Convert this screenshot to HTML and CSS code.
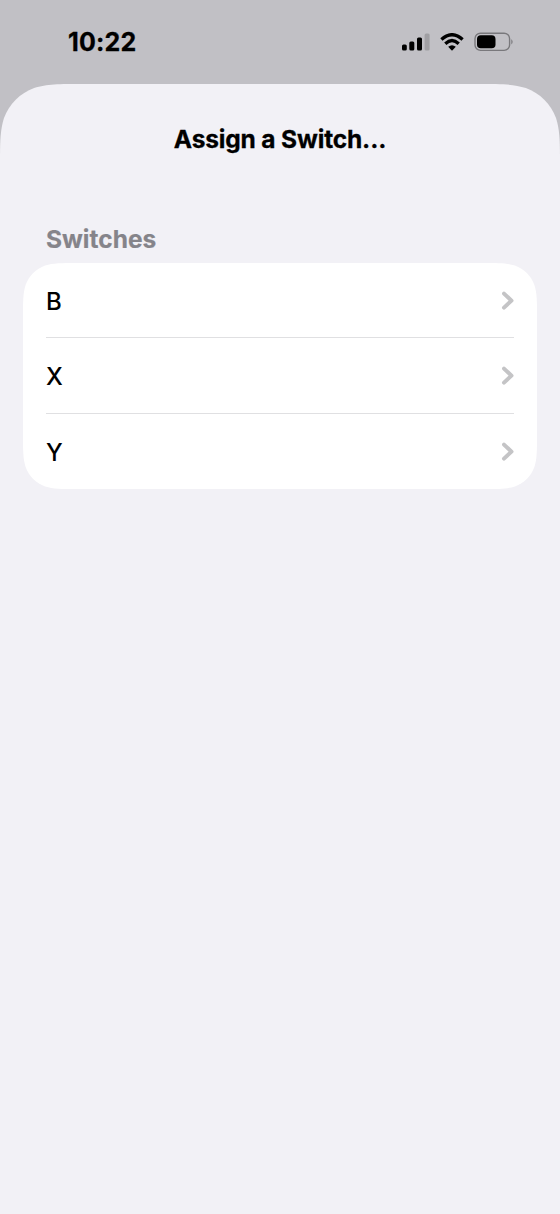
FILE: index.html
```html
<!DOCTYPE html>
<html lang="en">
<head>
<meta charset="utf-8">
<title>Assign a Switch</title>
<link rel="stylesheet" href="styles.css">
</head>
<body>
<header class="status">
  <span class="time">10:22</span>
  <div class="indicators">
    <svg class="signal" width="28" height="18" viewBox="0 0 28 18">
      <rect x="0" y="11.5" width="4.8" height="6" rx="1.5"/>
      <rect x="7.3" y="8.5" width="5" height="9" rx="1.5"/>
      <rect x="15" y="4.5" width="5" height="13" rx="1.5"/>
      <rect x="22.6" y="0.5" width="5" height="17" rx="1.5" fill="#a09fa3"/>
    </svg>
    <svg class="wifi" width="24" height="18" viewBox="0 0 24 18">
      <path d="M1.4 6.5Q12-3.1 22.6 6.5M5.3 10.7Q12 4.5 18.7 10.7" fill="none" stroke="#000" stroke-width="3.3"/>
      <path d="M8.2 13.7Q12 10.6 15.8 13.7L12 17.8Z"/>
    </svg>
    <svg class="battery" width="40" height="20" viewBox="0 0 40 20">
      <rect x="1" y="1.2" width="34.6" height="17.2" rx="5.5" fill="none" stroke="#79787c" stroke-width="1.4"/>
      <rect x="3" y="3.3" width="18.5" height="13" rx="3.8"/>
      <path d="M37.3 7Q40 9.8 37.3 12.6Z" fill="#79787c"/>
    </svg>
  </div>
</header>
<main class="sheet">
  <h1 class="title">Assign a Switch...</h1>
  <h2 class="section">Switches</h2>
  <ul class="card">
    <li class="row"><span class="label">B</span><svg class="chevron" width="14" height="20" viewBox="0 0 14 20"><path d="M4 2.6L11.5 9.6L4 16.6"/></svg></li>
    <li class="row"><span class="label">X</span><svg class="chevron" width="14" height="20" viewBox="0 0 14 20"><path d="M4 2.6L11.5 9.6L4 16.6"/></svg></li>
    <li class="row"><span class="label">Y</span><svg class="chevron" width="14" height="20" viewBox="0 0 14 20"><path d="M4 2.6L11.5 9.6L4 16.6"/></svg></li>
  </ul>
</main>
</body>
</html>
```
FILE: styles.css
```css
* { box-sizing: border-box; }
body {
  margin: 0;
  width: 560px;
  height: 1214px;
  display: flex;
  flex-direction: column;
  overflow: hidden;
  background: #c1c0c5;
  color: #000;
  font-family: Inter, "Liberation Sans", sans-serif;
}
svg { display: block; }
.status {
  height: 84px;
  padding: 0 46px 0 68px;
  display: flex;
  align-items: center;
  justify-content: space-between;
}
.time {
  font-size: 25px;
  font-weight: 700;
  line-height: 30px;
  letter-spacing: 0.2px;
  -webkit-text-stroke: 0.3px currentColor;
}
.indicators { display: flex; align-items: center; gap: 10px; }
.sheet {
  flex: 1;
  background: #f2f1f6;
  padding: 0 23px;
  clip-path: path("M0 82.5C0 58.8 0 46.9 4 34.1C9.1 20.1 20.1 9.1 34.1 4C46.9 0 58.8 0 82.5 0H477.5C501.2 0 513.1 0 525.9 4C539.9 9.1 550.9 20.1 556 34.1C560 46.9 560 58.8 560 82.5V1130H0Z");
}
.title {
  margin: 0;
  padding-top: 40px;
  font-size: 24.5px;
  line-height: 30px;
  font-weight: 700;
  letter-spacing: -0.15px;
  text-align: center;
  -webkit-text-stroke: 0.3px currentColor;
}
.section {
  margin: 70px 0 0;
  padding-left: 23px;
  font-size: 24.5px;
  line-height: 30px;
  font-weight: 700;
  color: #85848a;
  -webkit-text-stroke: 0.2px currentColor;
}
.card {
  list-style: none;
  margin: 9px 0 0;
  padding: 0;
  height: 226px;
  background: #fff;
  clip-path: path("M0 53.5C0 38.1 0 30.4 2.6 22.1C5.9 13 13 5.9 22.1 2.6C30.4 0 38.1 0 53.5 0H460.5C475.9 0 483.6 0 491.9 2.6C501 5.9 508.1 13 511.4 22.1C514 30.4 514 38.1 514 53.5V172.5C514 187.9 514 195.6 511.4 203.9C508.1 213 501 220.1 491.9 223.4C483.6 226 475.9 226 460.5 226H53.5C38.1 226 30.4 226 22.1 223.4C13 220.1 5.9 213 2.6 203.9C0 195.6 0 187.9 0 172.5Z");
}
.row {
  height: 75px;
  margin: 0 23px;
  padding-top: 2px;
  display: flex;
  align-items: center;
  justify-content: space-between;
  font-size: 24px;
  line-height: 30px;
  font-weight: 500;
  border-bottom: 1px solid #e0e0e2;
}
.row:nth-child(2) { height: 76px; padding-top: 1px; }
.row:last-child { padding-top: 1px; border-bottom: 0; }
.label { padding-top: 2px; }
.chevron path {
  fill: none;
  stroke: #c4c4c6;
  stroke-width: 4;
  stroke-linecap: round;
  stroke-linejoin: round;
}
```
